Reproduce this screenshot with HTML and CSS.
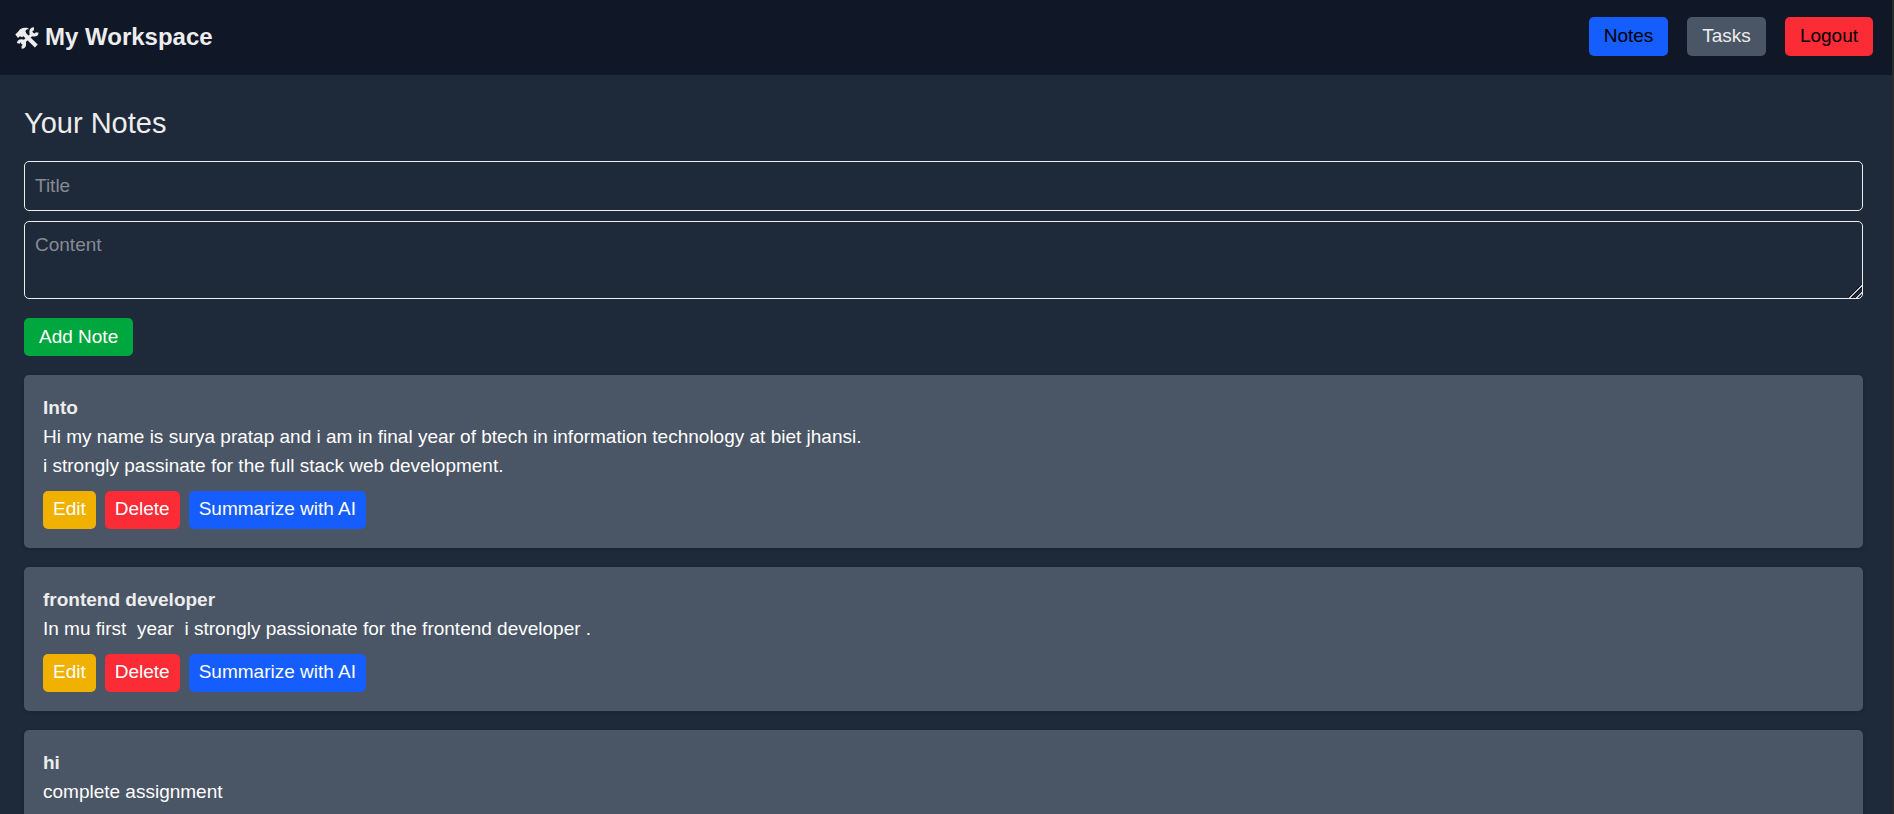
FILE: index.html
```html
<!DOCTYPE html>
<html lang="en">
<head>
<meta charset="utf-8">
<meta name="viewport" content="width=device-width, initial-scale=1">
<title>My Workspace</title>
<link rel="stylesheet" href="styles.css">
</head>
<body>
<header class="topbar">
  <h1 class="brand">
    <svg class="brand-icon" viewBox="0 0 24 24" aria-hidden="true">
      <path class="fill" d="M0.300 9.500 3.500 6.200C4.500 4.300 7 2.800 10 2.800c2 0 3.500.4 4 1.200-2.200.2-3.400 1-3.600 2.300l.8 2-4 3.900-2.400-.9-1.700 1.700z"/>
      <path class="handle" d="M8.500 8.500 21.300 21"/>
      <path class="wrench" d="M6.500 18.800 18.500 8"/>
      <path class="jaw" d="M19 3.700a3.200 3.200 0 1 0 3.200 3.800M3.300 18.300a3.200 3.200 0 1 1 3.300 3.900"/>
    </svg>
    <span>My Workspace</span>
  </h1>
  <nav class="nav">
    <button class="btn nav-btn blue dark-text" type="button">Notes</button>
    <button class="btn nav-btn gray" type="button">Tasks</button>
    <button class="btn nav-btn red dark-text" type="button">Logout</button>
  </nav>
</header>
<main class="page">
  <h2 class="page-title">Your Notes</h2>
  <form class="note-form">
    <input class="field title-field" type="text" placeholder="Title" aria-label="Title">
    <textarea class="field content-field" placeholder="Content" aria-label="Content"></textarea>
    <button class="btn add-btn green" type="button">Add Note</button>
  </form>
  <section class="notes">
    <article class="note">
      <h3 class="note-title">Into</h3>
      <p class="note-text">Hi my name is surya pratap and i am in final year of btech in information technology at biet jhansi.
i strongly passinate for the full stack web development.</p>
      <div class="actions">
        <button class="btn yellow" type="button">Edit</button>
        <button class="btn red" type="button">Delete</button>
        <button class="btn blue" type="button">Summarize with AI</button>
      </div>
    </article>
    <article class="note">
      <h3 class="note-title">frontend developer</h3>
      <p class="note-text">In mu first  year  i strongly passionate for the frontend developer .</p>
      <div class="actions">
        <button class="btn yellow" type="button">Edit</button>
        <button class="btn red" type="button">Delete</button>
        <button class="btn blue" type="button">Summarize with AI</button>
      </div>
    </article>
    <article class="note">
      <h3 class="note-title">hi</h3>
      <p class="note-text">complete assignment</p>
    </article>
  </section>
</main>
</body>
</html>
```
FILE: styles.css
```css
* {
  box-sizing: border-box;
  margin: 0;
}

html {
  scrollbar-width: none;
}

body {
  min-height: 100vh;
  background: #1e2939;
  border-right: 2px solid #2b2b2b;
  color: #ededed;
  font: 19px/29px "Liberation Sans", Arial, sans-serif;
}

.topbar {
  display: flex;
  justify-content: space-between;
  align-items: center;
  padding: 17px 19px 19px 15px;
  background: #101828;
}

.brand {
  display: flex;
  align-items: center;
  gap: 6px;
  font-size: 24px;
  font-weight: 700;
}

.brand-icon {
  width: 24px;
  height: 24px;
  fill: none;
  stroke: #ededed;
}

.brand-icon .fill {
  fill: #ededed;
  stroke: none;
}

.brand-icon .handle {
  stroke-width: 4;
}

.brand-icon .wrench {
  stroke-width: 3;
}

.brand-icon .jaw {
  stroke-width: 3;
}

.nav {
  display: flex;
  gap: 19px;
}

.btn {
  padding: 4px 10px 5px;
  border: 0;
  border-radius: 5px;
  color: #fff;
  font: inherit;
  cursor: pointer;
}

.nav-btn {
  padding: 4px 15px 6px;
}

.add-btn {
  align-self: flex-start;
  margin-top: 9px;
  padding: 4px 15px 5px;
}

.blue { background: #155dfc; }
.red { background: #fb2c36; }
.green { background: #00a63e; }
.yellow { background: #f0b100; }
.gray { background: #4a5565; color: #ededed; }
.dark-text { color: #000; }

.page {
  padding: 29px 29px 29px 24px;
}

.page-title {
  margin-bottom: 19px;
  font-size: 29px;
  font-weight: 400;
  line-height: 38px;
}

.note-form {
  display: flex;
  flex-direction: column;
  gap: 10px;
  margin-bottom: 19px;
}

.field {
  width: 100%;
  padding: 8px 10px;
  border: 1px solid #ededed;
  border-radius: 5px;
  background: transparent;
  color: inherit;
  font: inherit;
}

.field::placeholder {
  color: #868b93;
  opacity: 1;
}

.title-field {
  height: 50px;
}

.content-field {
  display: block;
  height: 78px;
  resize: vertical;
}

.content-field::-webkit-resizer {
  background: linear-gradient(135deg,
    transparent 50%, #101828 50% 55%, #c4c6ca 55% 63%, #101828 63% 69%,
    transparent 69% 74%, #101828 74% 78%, #c4c6ca 78% 86%, transparent 86%);
}

.notes {
  display: grid;
  gap: 19px;
}

.note {
  padding: 19px;
  border-radius: 5px;
  background: #4a5565;
  box-shadow: 0 1px 4px rgb(0 0 0 / 15%);
}

.note-title {
  font-size: 19px;
  font-weight: 700;
  line-height: 28px;
}

.note-text {
  color: #fff;
  white-space: pre-wrap;
}

.actions {
  display: flex;
  gap: 9px;
  margin-top: 11px;
}

.actions .btn {
  padding: 3px 10px 6px;
}
```
